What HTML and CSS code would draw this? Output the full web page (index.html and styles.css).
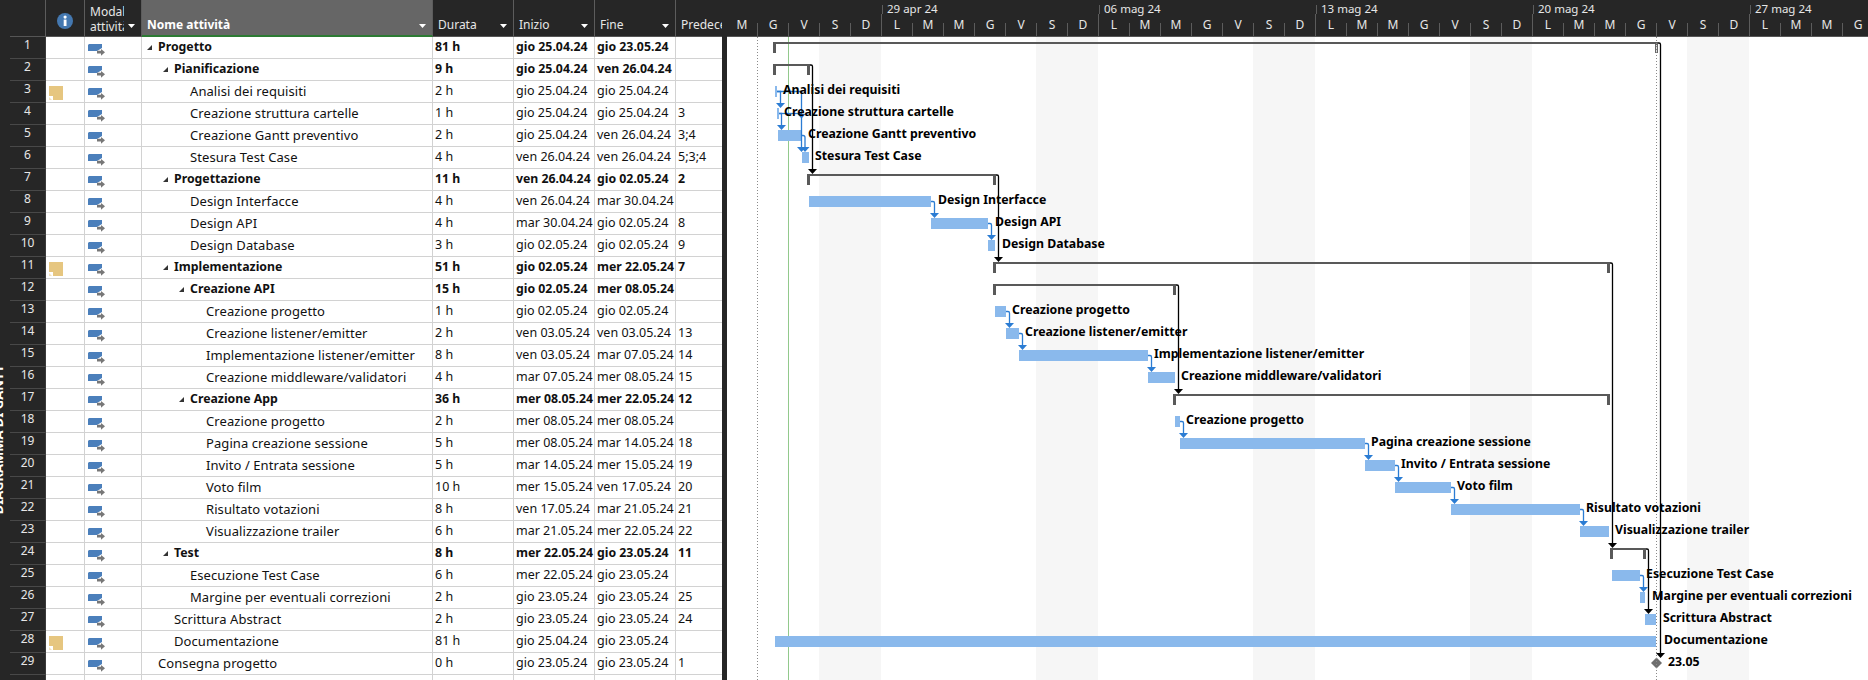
FILE: index.html
```html
<!DOCTYPE html>
<html lang="it">
<head>
	<meta charset="utf-8">
	<title>Diagramma di Gantt</title>
	<link rel="stylesheet" href="styles.css">
</head>
<body>
	<svg class="defs">
		<symbol id="mode" viewBox="0 0 17 12">
			<path fill="#4b7fbb" d="M0 1L1 0H14V4L9 7H0z"/>
			<path fill="#777" d="M9 6.8h4V5l4 3.2-4 3.6V9.6H9z"/>
		</symbol>
		<symbol id="note" viewBox="0 0 14 14">
			<path fill="#e6c680" d="M0 0H14V14H4V10H0z"/>
			<path fill="#e6c680" d="M0 11L3 14H0z" opacity=".5"/>
		</symbol>
	</svg>

	<div class="side">
		<div class="side-label">DIAGRAMMA DI GANTT</div>
	</div>

	<table class="grid">
		<colgroup>
			<col class="c-id"><col class="c-ind"><col class="c-mode"><col class="c-name"><col class="c-dur"><col class="c-date"><col class="c-date"><col class="c-pred">
		</colgroup>
		<thead>
			<tr>
				<th></th>
				<th class="th-ind">
					<svg class="info" viewBox="0 0 16 16"><circle cx="8" cy="8" r="8" fill="#4478b0"/><rect x="6.7" y="6.6" width="2.8" height="6.4" fill="#fff"/><circle cx="8.1" cy="4.1" r="1.6" fill="#fff"/></svg>
				</th>
				<th><div class="th-in"><span class="th-mode">Modal<br>attività</span><i class="caret"></i></div></th>
				<th class="th-active"><div class="th-in"><span>Nome attività</span><i class="caret"></i></div></th>
				<th><div class="th-in"><span>Durata</span><i class="caret"></i></div></th>
				<th><div class="th-in"><span>Inizio</span><i class="caret"></i></div></th>
				<th><div class="th-in"><span>Fine</span><i class="caret"></i></div></th>
				<th><div class="th-in"><span>Predecessori</span></div></th>
			</tr>
		</thead>
		<tbody>
			<tr class="sum"><td>1</td><td></td><td><svg class="mode"><use href="#mode"/></svg></td><td class="l0"><i class="tog"></i>Progetto</td><td>81 h</td><td>gio 25.04.24</td><td>gio 23.05.24</td><td></td></tr>
			<tr class="sum"><td>2</td><td></td><td><svg class="mode"><use href="#mode"/></svg></td><td class="l1"><i class="tog"></i>Pianificazione</td><td>9 h</td><td>gio 25.04.24</td><td>ven 26.04.24</td><td></td></tr>
			<tr><td>3</td><td><svg class="note"><use href="#note"/></svg></td><td><svg class="mode"><use href="#mode"/></svg></td><td class="l2">Analisi dei requisiti</td><td>2 h</td><td>gio 25.04.24</td><td>gio 25.04.24</td><td></td></tr>
			<tr><td>4</td><td></td><td><svg class="mode"><use href="#mode"/></svg></td><td class="l2">Creazione struttura cartelle</td><td>1 h</td><td>gio 25.04.24</td><td>gio 25.04.24</td><td>3</td></tr>
			<tr><td>5</td><td></td><td><svg class="mode"><use href="#mode"/></svg></td><td class="l2">Creazione Gantt preventivo</td><td>2 h</td><td>gio 25.04.24</td><td>ven 26.04.24</td><td>3;4</td></tr>
			<tr><td>6</td><td></td><td><svg class="mode"><use href="#mode"/></svg></td><td class="l2">Stesura Test Case</td><td>4 h</td><td>ven 26.04.24</td><td>ven 26.04.24</td><td>5;3;4</td></tr>
			<tr class="sum"><td>7</td><td></td><td><svg class="mode"><use href="#mode"/></svg></td><td class="l1"><i class="tog"></i>Progettazione</td><td>11 h</td><td>ven 26.04.24</td><td>gio 02.05.24</td><td>2</td></tr>
			<tr><td>8</td><td></td><td><svg class="mode"><use href="#mode"/></svg></td><td class="l2">Design Interfacce</td><td>4 h</td><td>ven 26.04.24</td><td>mar 30.04.24</td><td></td></tr>
			<tr><td>9</td><td></td><td><svg class="mode"><use href="#mode"/></svg></td><td class="l2">Design API</td><td>4 h</td><td>mar 30.04.24</td><td>gio 02.05.24</td><td>8</td></tr>
			<tr><td>10</td><td></td><td><svg class="mode"><use href="#mode"/></svg></td><td class="l2">Design Database</td><td>3 h</td><td>gio 02.05.24</td><td>gio 02.05.24</td><td>9</td></tr>
			<tr class="sum"><td>11</td><td><svg class="note"><use href="#note"/></svg></td><td><svg class="mode"><use href="#mode"/></svg></td><td class="l1"><i class="tog"></i>Implementazione</td><td>51 h</td><td>gio 02.05.24</td><td>mer 22.05.24</td><td>7</td></tr>
			<tr class="sum"><td>12</td><td></td><td><svg class="mode"><use href="#mode"/></svg></td><td class="l2"><i class="tog"></i>Creazione API</td><td>15 h</td><td>gio 02.05.24</td><td>mer 08.05.24</td><td></td></tr>
			<tr><td>13</td><td></td><td><svg class="mode"><use href="#mode"/></svg></td><td class="l3">Creazione progetto</td><td>1 h</td><td>gio 02.05.24</td><td>gio 02.05.24</td><td></td></tr>
			<tr><td>14</td><td></td><td><svg class="mode"><use href="#mode"/></svg></td><td class="l3">Creazione listener/emitter</td><td>2 h</td><td>ven 03.05.24</td><td>ven 03.05.24</td><td>13</td></tr>
			<tr><td>15</td><td></td><td><svg class="mode"><use href="#mode"/></svg></td><td class="l3">Implementazione listener/emitter</td><td>8 h</td><td>ven 03.05.24</td><td>mar 07.05.24</td><td>14</td></tr>
			<tr><td>16</td><td></td><td><svg class="mode"><use href="#mode"/></svg></td><td class="l3">Creazione middleware/validatori</td><td>4 h</td><td>mar 07.05.24</td><td>mer 08.05.24</td><td>15</td></tr>
			<tr class="sum"><td>17</td><td></td><td><svg class="mode"><use href="#mode"/></svg></td><td class="l2"><i class="tog"></i>Creazione App</td><td>36 h</td><td>mer 08.05.24</td><td>mer 22.05.24</td><td>12</td></tr>
			<tr><td>18</td><td></td><td><svg class="mode"><use href="#mode"/></svg></td><td class="l3">Creazione progetto</td><td>2 h</td><td>mer 08.05.24</td><td>mer 08.05.24</td><td></td></tr>
			<tr><td>19</td><td></td><td><svg class="mode"><use href="#mode"/></svg></td><td class="l3">Pagina creazione sessione</td><td>5 h</td><td>mer 08.05.24</td><td>mar 14.05.24</td><td>18</td></tr>
			<tr><td>20</td><td></td><td><svg class="mode"><use href="#mode"/></svg></td><td class="l3">Invito / Entrata sessione</td><td>5 h</td><td>mar 14.05.24</td><td>mer 15.05.24</td><td>19</td></tr>
			<tr><td>21</td><td></td><td><svg class="mode"><use href="#mode"/></svg></td><td class="l3">Voto film</td><td>10 h</td><td>mer 15.05.24</td><td>ven 17.05.24</td><td>20</td></tr>
			<tr><td>22</td><td></td><td><svg class="mode"><use href="#mode"/></svg></td><td class="l3">Risultato votazioni</td><td>8 h</td><td>ven 17.05.24</td><td>mar 21.05.24</td><td>21</td></tr>
			<tr><td>23</td><td></td><td><svg class="mode"><use href="#mode"/></svg></td><td class="l3">Visualizzazione trailer</td><td>6 h</td><td>mar 21.05.24</td><td>mer 22.05.24</td><td>22</td></tr>
			<tr class="sum"><td>24</td><td></td><td><svg class="mode"><use href="#mode"/></svg></td><td class="l1"><i class="tog"></i>Test</td><td>8 h</td><td>mer 22.05.24</td><td>gio 23.05.24</td><td>11</td></tr>
			<tr><td>25</td><td></td><td><svg class="mode"><use href="#mode"/></svg></td><td class="l2">Esecuzione Test Case</td><td>6 h</td><td>mer 22.05.24</td><td>gio 23.05.24</td><td></td></tr>
			<tr><td>26</td><td></td><td><svg class="mode"><use href="#mode"/></svg></td><td class="l2">Margine per eventuali correzioni</td><td>2 h</td><td>gio 23.05.24</td><td>gio 23.05.24</td><td>25</td></tr>
			<tr><td>27</td><td></td><td><svg class="mode"><use href="#mode"/></svg></td><td class="l1">Scrittura Abstract</td><td>2 h</td><td>gio 23.05.24</td><td>gio 23.05.24</td><td>24</td></tr>
			<tr><td>28</td><td><svg class="note"><use href="#note"/></svg></td><td><svg class="mode"><use href="#mode"/></svg></td><td class="l1">Documentazione</td><td>81 h</td><td>gio 25.04.24</td><td>gio 23.05.24</td><td></td></tr>
			<tr><td>29</td><td></td><td><svg class="mode"><use href="#mode"/></svg></td><td class="l0">Consegna progetto</td><td>0 h</td><td>gio 23.05.24</td><td>gio 23.05.24</td><td>1</td></tr>
			<tr class="tail"><td></td><td></td><td></td><td></td><td></td><td></td><td></td><td></td></tr>
		</tbody>
	</table>

	<div class="splitter"></div>

	<div class="chart">
		<div class="timeline">
			<div class="weeks">
				<div class="week first"></div>
				<div class="week">29 apr 24</div>
				<div class="week">06 mag 24</div>
				<div class="week">13 mag 24</div>
				<div class="week">20 mag 24</div>
				<div class="week">27 mag 24</div>
			</div>
			<div class="days">
				<div class="day">M</div><div class="day">G</div><div class="day">V</div><div class="day">S</div><div class="day end">D</div>
				<div class="day">L</div><div class="day">M</div><div class="day">M</div><div class="day">G</div><div class="day">V</div><div class="day">S</div><div class="day end">D</div>
				<div class="day">L</div><div class="day">M</div><div class="day">M</div><div class="day">G</div><div class="day">V</div><div class="day">S</div><div class="day end">D</div>
				<div class="day">L</div><div class="day">M</div><div class="day">M</div><div class="day">G</div><div class="day">V</div><div class="day">S</div><div class="day end">D</div>
				<div class="day">L</div><div class="day">M</div><div class="day">M</div><div class="day">G</div><div class="day">V</div><div class="day">S</div><div class="day end">D</div>
				<div class="day">L</div><div class="day">M</div><div class="day">M</div><div class="day">G</div>
			</div>
		</div>

		<!-- viewBox keeps page coordinates: one row is 22px, one day is 31px -->
		<svg class="canvas" viewBox="727 37 1141 643" width="1141" height="643">
			<defs>
				<marker id="head-blue" markerUnits="userSpaceOnUse" markerWidth="9" markerHeight="5" viewBox="0 0 9 5" refX="4.5" refY="0"><path d="M0 0H9L4.5 5z" fill="#2b7cd3"/></marker>
				<marker id="head-black" markerUnits="userSpaceOnUse" markerWidth="9" markerHeight="5" viewBox="0 0 9 5" refX="4.5" refY="0"><path d="M0 0H9L4.5 5z" fill="#000"/></marker>
			</defs>

			<g class="weekend">
				<rect x="819" y="37" width="62" height="643"/>
				<rect x="1036" y="37" width="62" height="643"/>
				<rect x="1253" y="37" width="62" height="643"/>
				<rect x="1470" y="37" width="62" height="643"/>
				<rect x="1687" y="37" width="62" height="643"/>
			</g>

			<path class="today" d="M788.5 37V680"/>

			<g class="bars">
				<rect x="775" y="86" width="2" height="11"/>
				<rect x="777" y="108" width="2" height="11"/>
				<rect x="778" y="130" width="23" height="11"/>
				<rect x="802" y="152" width="7" height="11"/>
				<rect x="809" y="196" width="122" height="11"/>
				<rect x="931" y="218" width="57" height="11"/>
				<rect x="988" y="240" width="7" height="11"/>
				<rect x="995" y="306" width="11" height="11"/>
				<rect x="1006" y="328" width="13" height="11"/>
				<rect x="1019" y="350" width="129" height="11"/>
				<rect x="1148" y="372" width="27" height="11"/>
				<rect x="1175" y="416" width="5" height="11"/>
				<rect x="1180" y="438" width="185" height="11"/>
				<rect x="1365" y="460" width="30" height="11"/>
				<rect x="1395" y="482" width="56" height="11"/>
				<rect x="1451" y="504" width="129" height="11"/>
				<rect x="1580" y="526" width="29" height="11"/>
				<rect x="1612" y="570" width="28" height="11"/>
				<rect x="1640" y="592" width="5" height="11"/>
				<rect x="1645" y="614" width="11" height="11"/>
				<rect x="775" y="636" width="881" height="11"/>
			</g>

			<g class="summary">
				<path d="M773 42h885v2h-882v9h-3z"/>
				<path d="M773 64h37v11h-3v-9h-31v9h-3z"/>
				<path d="M807 174h189v11h-3v-9h-183v9h-3z"/>
				<path d="M993 262h617v11h-3v-9h-611v9h-3z"/>
				<path d="M993 284h183v11h-3v-9h-177v9h-3z"/>
				<path d="M1173 394h437v11h-3v-9h-431v9h-3z"/>
				<path d="M1610 548h36v11h-3v-9h-30v9h-3z"/>
				<rect class="tick-end" x="1655.5" y="44.5" width="2" height="8"/>
			</g>

			<g class="links-blue" marker-end="url(#head-blue)">
				<path d="M777 91.5H780.5V103"/>
				<path d="M777 91.5H801.5V147"/>
				<path d="M779 113.5H781.5V125"/>
				<path d="M779 113.5H801.5"/>
				<path d="M801 135.5h2q2 0 2 2V147"/>
				<path d="M931 201.5h2q1.5 0 1.5 1.5V213"/>
				<path d="M988 223.5h2q1.5 0 1.5 1.5V235"/>
				<path d="M1006 311.5h2q1.5 0 1.5 1.5V323"/>
				<path d="M1019 333.5h2q1.5 0 1.5 1.5V345"/>
				<path d="M1148 355.5h2q1.5 0 1.5 1.5V367"/>
				<path d="M1180 421.5h2q1.5 0 1.5 1.5V433"/>
				<path d="M1365 443.5h2q1.5 0 1.5 1.5V455"/>
				<path d="M1395 465.5h2q1.5 0 1.5 1.5V477"/>
				<path d="M1451 487.5h2q1.5 0 1.5 1.5V499"/>
				<path d="M1580 509.5h2q1.5 0 1.5 1.5V521"/>
				<path d="M1640 575.5h2q1.5 0 1.5 1.5V587"/>
			</g>

			<path class="milestone" d="M1656.5 657.5L1662 663L1656.5 668.5L1651 663z"/>

			<path class="dotted" d="M757.5 37V680"/>
			<path class="dotted" d="M1656.5 37V680"/>

			<g class="links-black" marker-end="url(#head-black)">
				<path d="M810 65h1q1.5 0 1.5 1.5V169"/>
				<path d="M996 175h1q1.5 0 1.5 1.5V257"/>
				<path d="M1176 285h1q1.5 0 1.5 1.5V389"/>
				<path d="M1610 263h1q1.5 0 1.5 1.5V543"/>
				<path d="M1646 549h1q1.5 0 1.5 1.5V609"/>
				<path d="M1658 43h1q1.5 0 1.5 1.5V653"/>
			</g>

			<g class="labels">
				<text x="783" y="94">Analisi dei requisiti</text>
				<text x="784" y="116">Creazione struttura cartelle</text>
				<text x="808" y="138">Creazione Gantt preventivo</text>
				<text x="815" y="160">Stesura Test Case</text>
				<text x="938" y="204">Design Interfacce</text>
				<text x="995" y="226">Design API</text>
				<text x="1002" y="248">Design Database</text>
				<text x="1012" y="314">Creazione progetto</text>
				<text x="1025" y="336">Creazione listener/emitter</text>
				<text x="1154" y="358">Implementazione listener/emitter</text>
				<text x="1181" y="380">Creazione middleware/validatori</text>
				<text x="1186" y="424">Creazione progetto</text>
				<text x="1371" y="446">Pagina creazione sessione</text>
				<text x="1401" y="468">Invito / Entrata sessione</text>
				<text x="1457" y="490">Voto film</text>
				<text x="1586" y="512">Risultato votazioni</text>
				<text x="1615" y="534">Visualizzazione trailer</text>
				<text x="1646" y="578">Esecuzione Test Case</text>
				<text x="1652" y="600">Margine per eventuali correzioni</text>
				<text x="1663" y="622">Scrittura Abstract</text>
				<text x="1664" y="644">Documentazione</text>
				<text x="1668" y="666">23.05</text>
			</g>
		</svg>
	</div>
</body>
</html>
```

FILE: styles.css
```css
body {
	margin: 0;
	width: 1868px;
	height: 680px;
	overflow: hidden;
	display: flex;
	background: #262626;
	font: 12px "Noto Sans", "Open Sans", sans-serif;
	color: #111;
}

.defs {
	display: none;
}

/* left strip, view name is cut off by the window edge */
.side {
	width: 10px;
	flex: none;
	overflow: hidden;
	display: flex;
	flex-direction: column;
	justify-content: flex-end;
}

.side-label {
	writing-mode: vertical-rl;
	transform: rotate(180deg);
	margin: 0 0 166px -10px;
	width: 16px;
	font-weight: bold;
	font-size: 13px;
	line-height: 16px;
	white-space: nowrap;
	color: #fff;
}

/* task sheet */
.grid {
	width: 712px;
	flex: none;
	table-layout: fixed;
	border-collapse: separate;
	border-spacing: 0;
	background: #fff;
	align-self: flex-start;
}

.c-id { width: 36px; }
.c-ind { width: 39px; }
.c-mode { width: 57px; }
.c-name { width: 291px; }
.c-dur { width: 81px; }
.c-date { width: 81px; }
.c-pred { width: 46px; }

.grid th {
	height: 37px;
	box-sizing: border-box;
	padding: 0;
	background: #262626;
	border-right: 1px solid #5c5c5c;
	border-bottom: 1px solid #555;
	vertical-align: bottom;
	font-weight: normal;
	text-align: left;
	color: #e6e6e6;
	overflow: hidden;
}

.grid th:last-child {
	border-right: 0;
}

.th-in {
	display: flex;
	align-items: flex-end;
	justify-content: space-between;
	padding: 0 6px 2px 5px;
	line-height: 15px;
	white-space: nowrap;
}

.th-in span {
	margin-bottom: 2px;
}

.th-in .th-mode {
	width: 34px;
	overflow: hidden;
	margin-bottom: 0;
}

.grid th.th-active {
	background: #666;
	border-bottom: 2px solid #2c7a33;
	font-weight: bold;
	color: #fff;
}

.th-active .th-in {
	padding-bottom: 1px;
}

.th-ind {
	text-align: center;
}

.info {
	display: block;
	width: 16px;
	height: 16px;
	margin: 0 auto 7px;
}

.caret {
	width: 7px;
	height: 4px;
	flex: none;
	background: #fff;
	clip-path: polygon(0 0, 100% 0, 50% 100%);
	margin-bottom: 6px;
}

.grid td {
	height: 22px;
	box-sizing: border-box;
	padding: 0 0 1px 2px;
	border-right: 1px solid #d2d2d2;
	border-bottom: 1px solid #d2d2d2;
	white-space: nowrap;
	overflow: hidden;
	line-height: 20px;
	font-size: 12.5px;
}

.grid td:last-child {
	border-right: 0;
}

.grid td:nth-child(2),
.grid td:nth-child(3) {
	padding: 0;
}

.grid td.l0 { padding-left: 16px; }
.grid td.l1 { padding-left: 32px; }
.grid td.l2 { padding-left: 48px; }
.grid td.l3 { padding-left: 64px; }

.grid td.l0,
.grid td.l1,
.grid td.l2,
.grid td.l3 {
	font-size: 13px;
	letter-spacing: .08px;
}

.grid .sum td {
	font-weight: bold;
	font-size: 12.3px;
	letter-spacing: 0;
}

.grid td:first-child,
.grid .sum td:first-child {
	padding: 0 0 5px;
	background: #262626;
	border-right: 1px solid #3a3a3a;
	border-bottom: 1px solid #484848;
	text-align: center;
	line-height: 16px;
	font-size: 12px;
	color: #e6e6e6;
	font-weight: normal;
}

.grid .tail td {
	height: 5px;
	padding: 0;
	border-bottom: 0;
	line-height: 0;
}

.tog {
	display: inline-block;
	width: 5px;
	height: 5px;
	margin: 0 6px 1px -11px;
	background: #333;
	clip-path: polygon(100% 0, 100% 100%, 0 100%);
}

.mode {
	display: block;
	width: 17px;
	height: 12px;
	margin: 5px 0 0 3px;
}

.note {
	display: block;
	width: 14px;
	height: 14px;
	margin: 3px 0 0 3px;
}

.splitter {
	width: 5px;
	flex: none;
}

/* timescale and bars */
.chart {
	width: 1141px;
	flex: none;
	background: #fff;
}

.timeline {
	height: 37px;
	box-sizing: border-box;
	background: #262626;
	border-bottom: 1px solid #555;
	color: #e6e6e6;
	overflow: hidden;
}

.weeks {
	display: flex;
	height: 14px;
	line-height: 18px;
	font-size: 11.5px;
}

.week {
	width: 217px;
	flex: none;
	box-sizing: border-box;
	padding-left: 5px;
	white-space: nowrap;
	background: linear-gradient(#5c5c5c, #5c5c5c) left bottom / 1px 9px no-repeat;
}

.week.first {
	width: 155px;
	background: none;
}

.days {
	display: flex;
	height: 22px;
	line-height: 22px;
}

.day {
	width: 31px;
	flex: none;
	box-sizing: border-box;
	padding-right: 1px;
	text-align: center;
	background: linear-gradient(#5c5c5c, #5c5c5c) right bottom / 1px 13px no-repeat;
}

.day.end {
	background-size: 1px 22px;
}

.canvas {
	display: block;
}

.weekend {
	fill: #f6f6f6;
}

.today {
	stroke: #92c98c;
	stroke-width: 1;
}

.bars {
	fill: #8ab9ec;
}

.summary {
	fill: #595959;
}

.tick-end {
	fill: #ddd;
	stroke: #666;
}

.links-blue path {
	fill: none;
	stroke: #2b7cd3;
	stroke-width: 1.3;
}

.links-black path {
	fill: none;
	stroke: #000;
	stroke-width: 1.3;
}

.dotted {
	stroke: #8a8a8a;
	stroke-width: 1;
	stroke-dasharray: 1 2;
}

.milestone {
	fill: #6e6e6e;
}

.labels {
	font-weight: bold;
	font-size: 12.3px;
	fill: #000;
}
```
